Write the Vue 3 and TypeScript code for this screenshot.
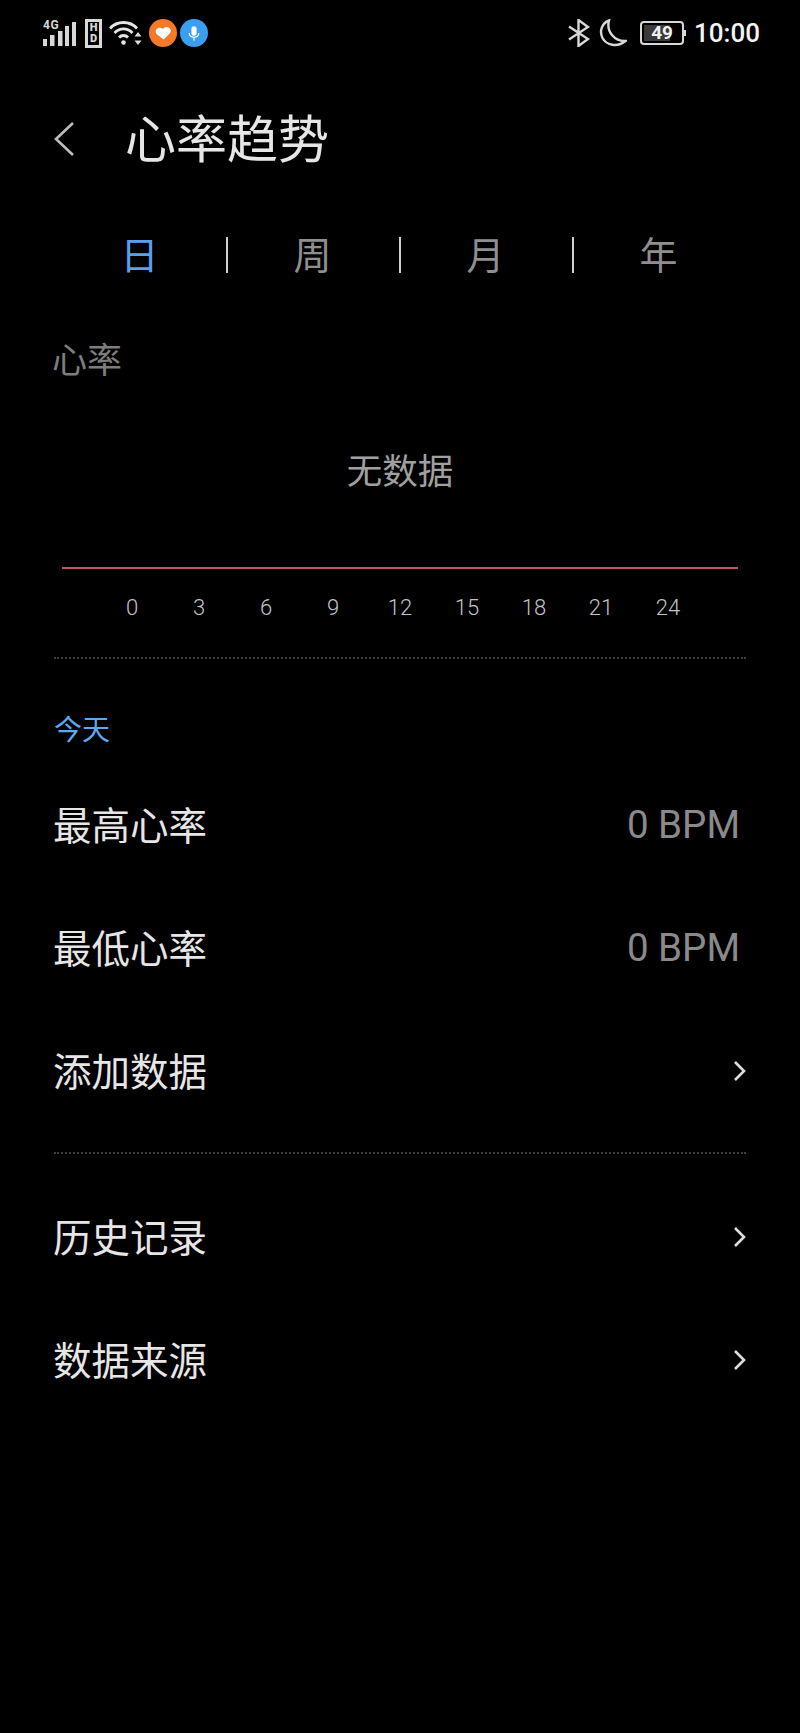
<script setup lang="ts">
const tabs = ['日', '周', '月', '年']
const hours = [0, 3, 6, 9, 12, 15, 18, 21, 24]
</script>

<template>
  <div class="page">
    <div class="status">
      <div class="group left">
        <div class="signal">
          <span class="net">4G</span>
          <svg width="33" height="27" viewBox="0 0 33 27" class="bars">
            <rect x="0" y="19" width="4" height="7" fill="#d8d8d8" />
            <rect x="7" y="15" width="4.500" height="11" fill="#d8d8d8" />
            <rect x="15" y="11" width="4.500" height="15" fill="#d8d8d8" />
            <rect x="22" y="6" width="4" height="20" fill="#d8d8d8" />
            <rect x="29" y="2" width="4" height="24" fill="#d8d8d8" />
          </svg>
        </div>
        <div class="hd"><span>H</span><span>D</span></div>
        <svg class="wifi" width="33" height="25" viewBox="0 0 33 25" fill="none" stroke="#e6e6e6" stroke-width="2.800">
          <path d="M1 7.500C8 -.5 21 -.5 28 7.500" />
          <path d="M5.500 12C10.500 6.500 18.500 6.500 23.500 12" />
          <path d="M10 16.500C12.500 13.800 16.500 13.800 19 16.500" />
          <circle cx="14.500" cy="21.500" r="2.300" fill="#e6e6e6" stroke="none" />
          <path d="M29 11l-3.500 4.500h7zM29 24l-3.500-4.500h7z" fill="#ddd" stroke="none" />
        </svg>
        <span class="bubble orange">
          <svg width="17" height="14" viewBox="0 0 18 15"><path d="M8.500 14.500L2 8.500C-.5 5.500 1.500 1.500 5 1.500 6.700 1.500 8 2.300 8.800 3.300 10 2 11.500 1.200 13.200 1.500 17 2.200 18.500 6 15.500 8.800z" fill="#fff" transform="rotate(-6 9 8)" /></svg>
        </span>
        <span class="bubble blue">
          <svg width="12" height="17" viewBox="0 0 14 19" fill="none"><rect x="4" y="1" width="6" height="11" rx="3" fill="#fff" /><path d="M1.500 9c0 6.500 11 6.500 11 0M7 14v4" stroke="#fff" stroke-width="1.400" /></svg>
        </span>
      </div>
      <div class="group right">
        <svg width="22" height="28" viewBox="0 0 22 28" fill="none" stroke="#d8d8d8" stroke-width="2.400"><path d="M1 7.500L20 20 10.500 27V1L20 8 1 20.500" /></svg>
        <svg class="moon" width="28" height="28" viewBox="0 0 28 28" fill="none" stroke="#d8d8d8" stroke-width="2.400"><path d="M10 1.500C3 4 0 12 3.500 19c4 7.500 15 9.500 23 3C16 22.500 7 13 10 1.500z" /></svg>
        <div class="battery">
          <div class="cell"><span class="level"></span><span class="pct">49</span></div>
          <span class="nub"></span>
        </div>
        <span class="time">10:00</span>
      </div>
    </div>

    <header class="head">
      <svg class="back" width="22" height="36" viewBox="0 0 22 36" fill="none" stroke="#bdbdbd" stroke-width="2.600"><path d="M20 2L3 18l17 16" /></svg>
      <h1>心率趋势</h1>
    </header>

    <nav class="tabs">
      <div v-for="(t, i) in tabs" :key="t" class="tab" :class="{ active: i === 0 }">{{ t }}</div>
    </nav>

    <div class="chart-title">心率</div>
    <div class="empty">无数据</div>
    <div class="axis-line"></div>
    <div class="axis">
      <span v-for="h in hours" :key="h">{{ h }}</span>
    </div>
    <div class="rule first"></div>

    <div class="today">今天</div>
    <div class="row"><span>最高心率</span><span class="val">0 BPM</span></div>
    <div class="row"><span>最低心率</span><span class="val">0 BPM</span></div>
    <div class="row">
      <span>添加数据</span>
      <svg class="chev" width="14" height="22" viewBox="0 0 14 22" fill="none" stroke="#ddd" stroke-width="2.600"><path d="M2 2l9 9-9 9" /></svg>
    </div>
    <div class="rule second"></div>
    <div class="row">
      <span>历史记录</span>
      <svg class="chev" width="14" height="22" viewBox="0 0 14 22" fill="none" stroke="#ddd" stroke-width="2.600"><path d="M2 2l9 9-9 9" /></svg>
    </div>
    <div class="row">
      <span>数据来源</span>
      <svg class="chev" width="14" height="22" viewBox="0 0 14 22" fill="none" stroke="#ddd" stroke-width="2.600"><path d="M2 2l9 9-9 9" /></svg>
    </div>
  </div>
</template>

<style>
html, body { margin: 0; background: #000; }
</style>

<style scoped>
.page {
  width: 800px;
  height: 1733px;
  background: #000;
  color: #e9e9e9;
  font-family: Roboto, "Noto Sans CJK SC", sans-serif;
  overflow: hidden;
  box-sizing: border-box;
}
.status {
  height: 66px;
  padding: 0 40px 0 43px;
  display: flex;
  justify-content: space-between;
  align-items: center;
}
.group { display: flex; align-items: center; }
.signal { position: relative; width: 33px; height: 27px; }
.net { position: absolute; left: 0; top: -1px; font-size: 12px; font-weight: 700; letter-spacing: .5px; color: #d8d8d8; line-height: 12px; }
.bars { display: block; }
.hd {
  width: 11px; height: 21px; margin-left: 9px; padding: 1px 0;
  border: 3px solid #d8d8d8; box-sizing: content-box;
  display: flex; flex-direction: column; align-items: center; justify-content: space-between;
  font-size: 11px; font-weight: 900; line-height: 10px; color: #d8d8d8;
}
.wifi { margin-left: 7px; }
.bubble { width: 28px; height: 28px; border-radius: 50%; display: flex; align-items: center; justify-content: center; }
.orange { background: #f47a2a; margin-left: 7px; }
.blue { background: #3a9ff0; margin-left: 3px; }
.moon { margin-left: 9px; }
.battery { display: flex; align-items: center; margin-left: 13px; }
.cell {
  position: relative; width: 40px; height: 20px; border: 2px solid #d8d8d8; border-radius: 4px;
  display: flex; align-items: center; justify-content: center;
}
.level { position: absolute; left: 2px; top: 2px; bottom: 2px; width: 26px; background: #3b3b3b; }
.pct { position: relative; font-size: 19px; font-weight: 700; color: #f2f2f2; line-height: 20px; }
.nub { width: 2px; height: 6px; background: #d8d8d8; }
.time { margin-left: 8px; font-size: 26px; font-weight: 500; color: #f4f4f4; }
.head { height: 150px; padding-left: 53px; display: flex; align-items: center; }
.back { margin-bottom: 4px; }
.head h1 { margin: 0 0 0 50px; font-size: 51px; font-weight: 400; line-height: 60px; color: #e6e6e6; }
.tabs { margin: 21px 55px 0 53px; display: grid; grid-template-columns: repeat(4, 1fr); height: 38px; }
.tab { font-size: 38px; line-height: 38px; text-align: center; color: #8f8f8f; font-weight: 400; position: relative; }
.tab + .tab::before { content: ""; position: absolute; left: 0; top: 0; height: 36px; width: 2px; background: #cfcfcf; }
.tabs .active { color: #5a9ff0; }
.chart-title { margin: 65px 0 0 52px; font-size: 35px; line-height: 44px; color: #7d7d7d; }
.empty { margin-top: 66px; text-align: center; font-size: 35.500px; line-height: 44px; color: #a0a0a0; }
.axis-line { margin: 73px 62px 0; height: 2px; background: #c9515c; }
.axis { margin: 24px 0 0; padding: 0 116px; display: flex; justify-content: space-between; font-size: 22px; line-height: 30px; color: #c4c4c4; font-weight: 300; }
.axis span { width: 32px; text-align: center; }
.rule { margin: 0 54px; border-top: 2px dotted #3f3f3f; }
.rule.first { margin-top: 34px; }
.today { margin: 54px 0 0 54px; font-size: 28px; line-height: 36px; color: #5fa8ee; }
.row {
  height: 123px; margin: 0 54px 0 53px; display: flex; justify-content: space-between; align-items: center;
  font-size: 38.500px; color: #e6e6e6;
}
.today + .row { margin-top: 12px; }
.val { color: #8a8a8a; margin-right: 6px; margin-top: 4px; }
.chev { margin-right: -1px; margin-top: 5px; }
.rule.second + .row { margin-top: 19px; }
.row:has(+ .rule.second) { margin-bottom: 22px; }
</style>
